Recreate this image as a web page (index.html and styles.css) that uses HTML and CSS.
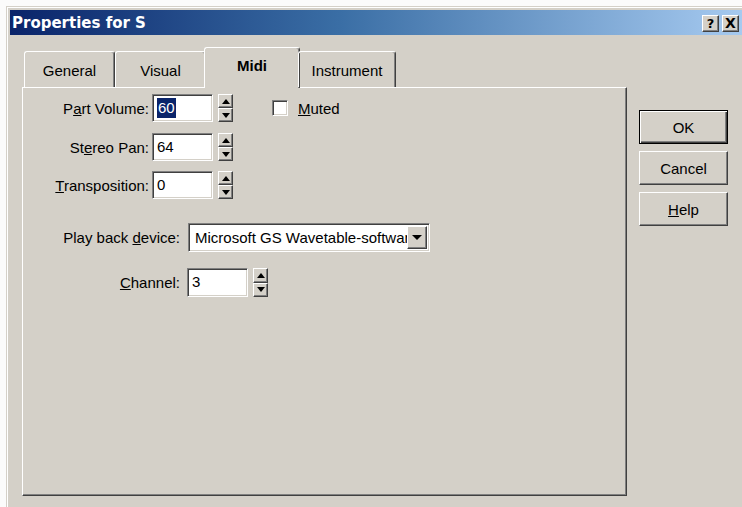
FILE: index.html
```html
<!DOCTYPE html>
<html lang="en">
<head>
<meta charset="utf-8">
<title>Properties for S</title>
<link rel="stylesheet" href="styles.css">
</head>
<body>
<div class="window">
  <div class="titlebar">
    <span class="title">Properties for S</span>
    <div class="caption-btns">
      <span class="cap-btn">?</span>
      <span class="cap-btn cap-close">X</span>
    </div>
  </div>
  <div class="client">
    <div class="tabbed">
      <div class="tabs">
        <div class="tab tab-general">General</div>
        <div class="tab tab-visual">Visual</div>
        <div class="tab tab-midi active">Midi</div>
        <div class="tab tab-instrument">Instrument</div>
      </div>
      <div class="panel">
        <div class="row">
          <label class="lbl">P<u>a</u>rt Volume:</label>
          <div class="field"><span class="sel">60</span></div>
          <div class="spin"><span class="spin-up"><i></i></span><span class="spin-down"><i></i></span></div>
          <span class="check"></span>
          <span class="check-label"><u>M</u>uted</span>
        </div>
        <div class="row row-2">
          <label class="lbl">St<u>e</u>reo Pan:</label>
          <div class="field">64</div>
          <div class="spin"><span class="spin-up"><i></i></span><span class="spin-down"><i></i></span></div>
        </div>
        <div class="row row-3">
          <label class="lbl"><u>T</u>ransposition:</label>
          <div class="field">0</div>
          <div class="spin"><span class="spin-up"><i></i></span><span class="spin-down"><i></i></span></div>
        </div>
        <div class="row row-device">
          <label class="lbl lbl-wide">Play back <u>d</u>evice:</label>
          <div class="combo">
            <span class="combo-text">Microsoft GS Wavetable-software synth</span>
            <span class="combo-btn"><i></i></span>
          </div>
        </div>
        <div class="row row-channel">
          <label class="lbl lbl-wide lbl-channel"><u>C</u>hannel:</label>
          <div class="field field-tall">3</div>
          <div class="spin spin-tall"><span class="spin-up"><i></i></span><span class="spin-down"><i></i></span></div>
        </div>
      </div>
    </div>
    <div class="actions">
      <button class="btn default">OK</button>
      <button class="btn">Cancel</button>
      <button class="btn"><u>H</u>elp</button>
    </div>
  </div>
</div>
</body>
</html>
```
FILE: styles.css
```css
html, body {
  margin: 0;
  padding: 0;
  background: #fbfbfb;
  width: 742px;
  height: 507px;
  overflow: hidden;
}

.window {
  margin: 6px 0 0 6px;
  width: 736px;
  height: 501px;
  box-sizing: border-box;
  background: #d4d0c8;
  border-top: 1px solid #d4d0c8;
  border-left: 1px solid #d4d0c8;
  box-shadow: inset 1px 1px #fff;
  padding: 3px 0 0 3px;
  font-family: "Liberation Sans", Arial, sans-serif;
  font-size: 15px;
  color: #000;
}

/* caption bar */
.titlebar {
  height: 25px;
  display: flex;
  align-items: center;
  justify-content: space-between;
  background: linear-gradient(to right, #0a246a 0%, #3a6ea5 45%, #a6caf0 100%);
  padding: 0 3px 0 2px;
}

.title {
  font-family: "DejaVu Sans", Verdana, sans-serif;
  font-weight: bold;
  font-size: 15px;
  color: #fff;
}

.caption-btns {
  display: flex;
  gap: 3px;
  margin-top: 1px;
}

.cap-btn {
  width: 15px;
  height: 15px;
  display: flex;
  align-items: center;
  justify-content: center;
  background: #d4d0c8;
  border: 1px solid;
  border-color: #fff #404040 #404040 #fff;
  box-shadow: inset -1px -1px #808080;
  font-family: "DejaVu Sans", sans-serif;
  font-weight: bold;
  font-size: 13px;
  line-height: 1;
}

.cap-close {
  font-size: 14px;
}

/* dialog body */
.client {
  display: flex;
  padding-top: 12px;
}

.tabbed {
  margin-left: 12px;
  width: 605px;
}

.tabs {
  display: flex;
  height: 40px;
  padding-left: 2px;
  align-items: flex-end;
  position: relative;
  z-index: 1;
}

.tab {
  height: 36px;
  box-sizing: border-box;
  display: flex;
  align-items: center;
  justify-content: center;
  border-top: 1px solid #fff;
  border-left: 1px solid #fff;
  border-right: 1px solid #404040;
  box-shadow: inset -1px 0 #808080;
  border-radius: 3px 3px 0 0;
  padding-top: 1px;
}

.tab-general { width: 91px; }
.tab-visual { width: 91px; }
.tab-midi { width: 92px; }
.tab-instrument { width: 98px; }

.tab.active {
  height: 41px;
  margin: 0 -2px -1px -2px;
  width: 96px;
  background: #d4d0c8;
  font-weight: bold;
  padding-top: 0;
  padding-bottom: 5px;
}

.panel {
  height: 409px;
  box-sizing: border-box;
  border: 1px solid;
  border-color: #fff #404040 #404040 #fff;
  box-shadow: inset -1px -1px #808080;
  padding-top: 6px;
}

.row {
  display: flex;
  align-items: center;
  height: 28px;
}

.row-2 { margin-top: 11px; }
.row-3 { margin-top: 10px; }
.row-device { margin-top: 24px; height: 29px; }
.row-channel { margin-top: 16px; height: 29px; }

.lbl {
  width: 126px;
  margin-right: 3px;
  text-align: right;
  white-space: nowrap;
}

.lbl-wide {
  width: 157px;
  margin-right: 8px;
}

.lbl-channel {
  margin-right: 7px;
}

/* sunken edit box */
.field {
  width: 61px;
  height: 28px;
  box-sizing: border-box;
  background: #fff;
  border: 1px solid;
  border-color: #808080 #fff #fff #808080;
  box-shadow: inset 1px 1px #404040, inset -1px -1px #d4d0c8;
  padding: 3px 0 0 4px;
  line-height: 20px;
}

.field-tall {
  height: 29px;
}

.sel {
  display: inline-block;
  background: #0a246a;
  color: #fff;
  padding: 0 1px;
}

/* up/down control */
.spin {
  margin-left: 5px;
  width: 15px;
  height: 28px;
  display: flex;
  flex-direction: column;
}

.spin-tall {
  height: 29px;
}

.spin-up,
.spin-down {
  flex: 1;
  box-sizing: border-box;
  background: #d4d0c8;
  border: 1px solid;
  border-color: #fff #404040 #404040 #fff;
  box-shadow: inset -1px -1px #808080;
  display: flex;
  align-items: center;
  justify-content: center;
}

.spin-up i,
.spin-down i {
  width: 0;
  height: 0;
  border-left: 4px solid transparent;
  border-right: 4px solid transparent;
}

.spin-up i {
  border-bottom: 5px solid #000;
}

.spin-down i {
  border-top: 5px solid #000;
}

.check {
  margin-left: 39px;
  width: 16px;
  height: 16px;
  box-sizing: border-box;
  background: #fff;
  border: 1px solid;
  border-color: #808080 #fff #fff #808080;
  box-shadow: inset 1px 1px #404040, inset -1px -1px #d4d0c8;
}

.check-label {
  margin-left: 10px;
}

/* drop-down list */
.combo {
  width: 242px;
  height: 29px;
  box-sizing: border-box;
  background: #fff;
  border: 1px solid;
  border-color: #808080 #fff #fff #808080;
  box-shadow: inset 1px 1px #404040, inset -1px -1px #d4d0c8;
  display: flex;
  align-items: center;
  padding: 2px;
}

.combo-text {
  flex: 1;
  overflow: hidden;
  white-space: nowrap;
  padding-left: 4px;
}

.combo-btn {
  width: 20px;
  height: 23px;
  box-sizing: border-box;
  background: #d4d0c8;
  border: 1px solid;
  border-color: #fff #404040 #404040 #fff;
  box-shadow: inset -1px -1px #808080;
  display: flex;
  align-items: center;
  justify-content: center;
  flex: none;
}

.combo-btn i {
  width: 0;
  height: 0;
  border-left: 5px solid transparent;
  border-right: 5px solid transparent;
  border-top: 5px solid #000;
}

/* push buttons */
.actions {
  margin-left: 12px;
  padding-top: 63px;
  display: flex;
  flex-direction: column;
  gap: 7px;
}

.btn {
  width: 89px;
  height: 34px;
  box-sizing: border-box;
  margin: 0;
  padding: 0;
  background: #d4d0c8;
  font-family: "Liberation Sans", Arial, sans-serif;
  font-size: 15px;
  color: #000;
  border: 1px solid;
  border-color: #fff #404040 #404040 #fff;
  box-shadow: inset -1px -1px #808080;
}

.btn.default {
  border: 1px solid #000;
  box-shadow: inset 1px 1px #fff, inset -1px -1px #404040, inset -2px -2px #808080;
}
```
